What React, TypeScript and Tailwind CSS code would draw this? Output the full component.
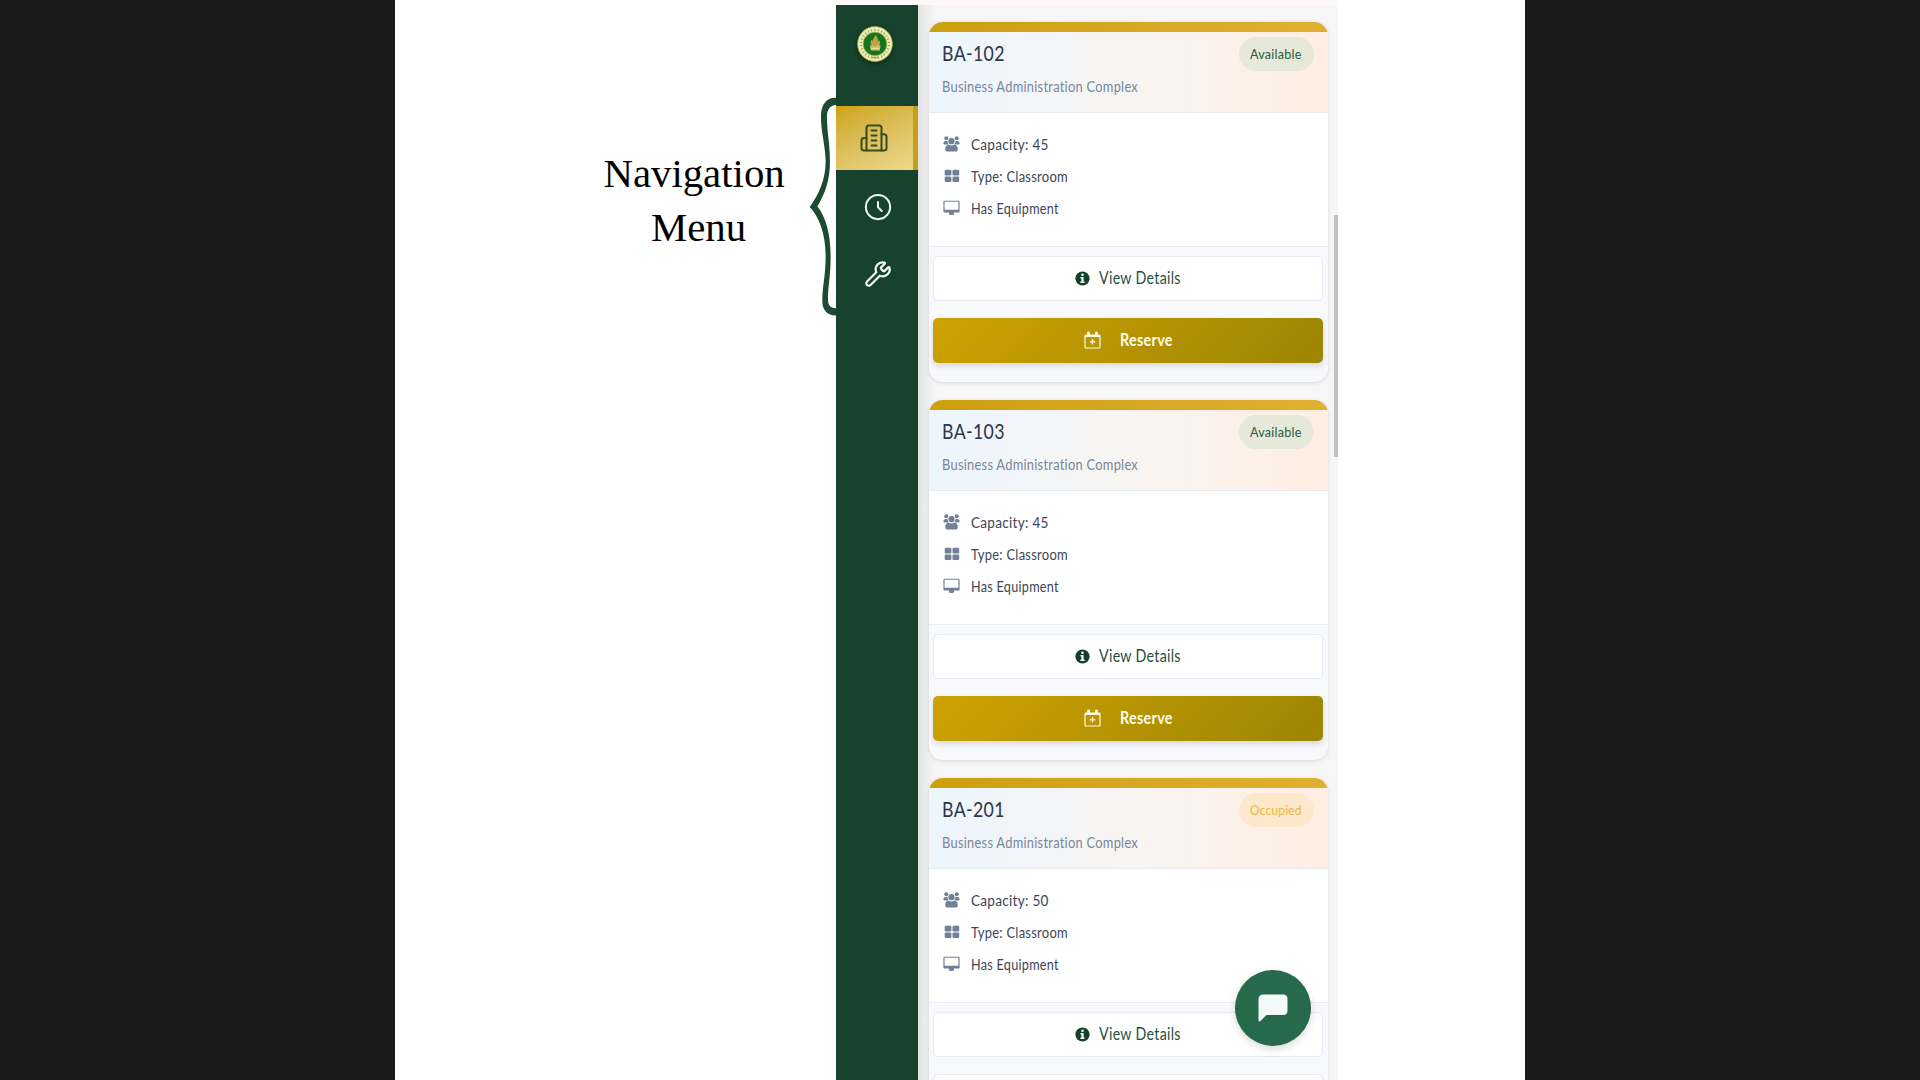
import { useLayoutEffect, useRef, useState } from "react";
import type { ReactNode } from "react";
import { Wrench } from "lucide-react";

type Room = { name: string; capacity: number; available: boolean };

const rooms: Room[] = [
  { name: "BA-102", capacity: 45, available: true },
  { name: "BA-103", capacity: 45, available: true },
  { name: "BA-201", capacity: 50, available: false },
];

/** Single line of text condensed horizontally to a given width. */
function Condensed({ width, className = "", children }: { width: number; className?: string; children: ReactNode }) {
  const ref = useRef<HTMLSpanElement>(null);
  const [scale, setScale] = useState(1);
  useLayoutEffect(() => {
    if (ref.current) setScale(width / ref.current.offsetWidth);
  }, [width, children]);
  return (
    <span className={"block shrink-0 whitespace-nowrap " + className} style={{ width }}>
      <span ref={ref} className="inline-block origin-left tracking-[0.02em]" style={{ transform: `scaleX(${scale})` }}>
        {children}
      </span>
    </span>
  );
}

function PeopleIcon() {
  return (
    <svg viewBox="0 0 17 16" className="h-4 w-[17px]" fill="currentColor">
      <circle cx="3.300" cy="2.300" r="2" />
      <circle cx="13.700" cy="2.300" r="2" />
      <circle cx="8.500" cy="5.200" r="3.100" />
      <path d="M.4 7.400c0-1.500.9-2.500 2.200-2.500h1.900c.1 1.500.6 2.500 1.500 3.500H1.200c-.5 0-.8-.3-.8-1ZM16.600 7.400c0-1.500-.9-2.500-2.200-2.500h-1.900c-.1 1.500-.6 2.500-1.500 3.500h4.800c.5 0 .8-.3.8-1Z" />
      <path d="M2.200 13c0-2.600 1.300-4.300 3.400-4.300.9.500 1.900.8 2.900.8s2-.3 2.900-.8c2.100 0 3.400 1.700 3.400 4.300 0 1.700-.8 2.600-2.400 2.600H4.600c-1.600 0-2.400-.9-2.400-2.600Z" />
    </svg>
  );
}

function GridIcon() {
  return (
    <svg viewBox="0 0 16 14" className="h-[14px] w-4" fill="currentColor">
      <rect x="0.7" y="0.8" width="6.7" height="5.6" rx="1.2" />
      <rect x="8.5" y="0.8" width="6.7" height="5.6" rx="1.2" />
      <rect x="0.7" y="7.4" width="6.7" height="5.6" rx="1.2" />
      <rect x="8.5" y="7.4" width="6.7" height="5.6" rx="1.2" />
    </svg>
  );
}

function MonitorIcon() {
  return (
    <svg viewBox="0 0 17 16" className="h-4 w-[17px]" fill="currentColor">
      <path
        fillRule="evenodd"
        d="M1.6.7h13.8c.7 0 1.2.5 1.2 1.2v9.5c0 .7-.5 1.2-1.2 1.2h-4.400v1c0 .8-.4 1.300-1.100 1.300H7.100c-.7 0-1.100-.5-1.100-1.300v-1H1.6c-.7 0-1.2-.5-1.2-1.2V1.900c0-.7.5-1.200 1.200-1.200Zm0 1.100v7.900h13.800V1.800Z"
      />
    </svg>
  );
}

function InfoIcon() {
  return (
    <svg viewBox="0 0 15 15" className="size-[15px]">
      <circle cx="7.500" cy="7.500" r="7.100" fill="#12402b" />
      <circle cx="7.500" cy="3.700" r="1.300" fill="#fff" />
      <path d="M5.500 6.100h3.100v4.300h1v1.500H5.400v-1.500h1V7.600h-.9Z" fill="#fff" />
    </svg>
  );
}

function CalendarPlusIcon() {
  return (
    <svg viewBox="0 0 17 18" className="h-[18px] w-[17px] -translate-y-px" fill="none" stroke="currentColor">
      <rect x="1" y="4" width="15" height="13" rx="1" strokeWidth="1.2" />
      <path d="M1 5h15" strokeWidth="2" />
      <path d="M4.500 2v2.200M12.500 2v2.200" strokeWidth="2.800" strokeLinecap="round" />
      <path d="M8.500 8v5.600M5.700 10.800h5.600" strokeWidth="1.300" />
    </svg>
  );
}

function BuildingIcon() {
  return (
    <svg viewBox="0 0 24 24" className="size-[30px]" fill="none" stroke="currentColor" strokeWidth="1.600" strokeLinecap="round" strokeLinejoin="round">
      <path d="M6 22V4a2 2 0 0 1 2-2h8a2 2 0 0 1 2 2v18Z" />
      <path d="M6 12H4a2 2 0 0 0-2 2v6a2 2 0 0 0 2 2h2" />
      <path d="M18 9h2a2 2 0 0 1 2 2v9a2 2 0 0 1-2 2h-2" />
      <path d="M10 6h4M10 10h4M10 14h4M10 18h4" />
    </svg>
  );
}

function Seal() {
  const marks = Array.from({ length: 26 }, (_, i) => i * (360 / 26));
  return (
    <svg viewBox="0 0 36 36" className="size-9 rounded-full shadow-[0_2px_5px_rgba(0,0,0,0.4)]">
      <circle cx="18" cy="18" r="17.500" fill="#efedb4" stroke="#8fa83a" strokeWidth="0.9" />
      {marks.map((a) => (
        <path key={a} d="M17.500 2.900h1v2.200h-1z" fill="#8a9a55" transform={`rotate(${a} 18 18)`} />
      ))}
      <circle cx="18" cy="18" r="11.800" fill="#177320" stroke="#a5b44a" strokeWidth="0.7" />
      <path d="M19 8.500c-1 2.500-3 3.600-3.200 6.200l-1.700-.8c-.9 3-.1 5 .9 6.100h6.900c1.300-1.500 1.500-4 .6-5.800l-1.300 1.200c.2-2.400-1.400-3.900-2.200-6.900Z" fill="#c0a13c" />
      <path d="M13 19.500q2.800-.6 5.200.7 2.500-1.300 5.300-.7l-.8 5h-8.900Z" fill="#d9bf62" />
      <path d="M14 22.500h8.500" stroke="#efe2a0" strokeWidth="0.8" />
      <path d="M14 31.500h8" stroke="#c98e49" strokeWidth="1.300" />
    </svg>
  );
}

function Brace() {
  return (
    <svg viewBox="686 52 82 658" className="h-[219.300px] w-[27.300px]" fill="#1d4a34">
      <path d="M768 54C740 52 722 73 722 110C722 160 736 200 736 245C736 300 715 345 688 382C715 410 736 460 736 530C736 590 726 620 726 665C726 692 742 709 768 708V686C752 686 743 680 743 660C743 620 751 590 751 530C751 460 735 410 711 380C735 340 749 300 749 245C749 190 740 160 740 110C740 90 750 76 768 76Z" />
    </svg>
  );
}

function Detail({ icon, width, children }: { icon: ReactNode; width: number; children: ReactNode }) {
  return (
    <li className="flex h-8 items-center gap-[11px]">
      <span className="flex w-[17px] -translate-y-px justify-center text-[#718096]">{icon}</span>
      <Condensed width={width}>{children}</Condensed>
    </li>
  );
}

function RoomCard({ room }: { room: Room }) {
  return (
    <article className="h-[360px] shrink-0 overflow-hidden rounded-[14px] bg-[#f7f9fc] shadow-[0_1px_4px_rgba(0,0,0,0.12)]">
      <div className="h-[10px] bg-linear-to-r from-[#cc9f0c] to-[#e0b030]" />
      <header className="flex h-[81px] justify-between border-b border-[#e6e9ed] bg-linear-to-r from-[#edf5ff] via-[#f8f5f2] to-[#ffeee2] pr-[14.500px] pl-[13px]">
        <div className="pt-[7px]">
          <h2 className="text-[21px] leading-7 text-[#2d3748]">
            <Condensed width={62.500}>{room.name}</Condensed>
          </h2>
          <p className="pt-[7px] text-[15.500px] leading-6 text-[#7a8699]">
            <Condensed width={196}>Business Administration Complex</Condensed>
          </p>
        </div>
        <span
          className={
            "mt-[5px] flex h-[34px] w-[75px] items-center justify-center rounded-full pb-px text-[13.500px] " +
            (room.available ? "bg-[#e6e8da] text-[#2b5a3d]" : "bg-[#fee8cb] text-[#e6b93c]")
          }
        >
          <Condensed width={52}>{room.available ? "Available" : "Occupied"}</Condensed>
        </span>
      </header>
      <ul className="h-[133px] bg-white pt-[15.500px] pl-[14px] text-[15.500px] text-[#3c4655]">
        <Detail icon={<PeopleIcon />} width={78}>{`Capacity: ${room.capacity}`}</Detail>
        <Detail icon={<GridIcon />} width={97}>
          Type: Classroom
        </Detail>
        <Detail icon={<MonitorIcon />} width={87.500}>
          Has Equipment
        </Detail>
      </ul>
      <footer className="flex flex-col gap-[17px] border-t border-[#eaedf1] pt-[9px] pr-[5px] pl-1">
        <button className="flex h-[45px] items-center justify-center gap-[9px] rounded-[5px] border border-[#e6eaee] bg-white text-[16.500px] text-[#24523c]">
          <InfoIcon />
          <Condensed width={82}>View Details</Condensed>
        </button>
        {room.available ? (
          <button className="flex h-[45px] items-center justify-center gap-[19px] rounded-[5px] bg-linear-135 from-[#cfa203] to-[#9c8502] text-[16.500px] font-bold text-[#fffbe8] shadow-[0_3px_6px_rgba(0,0,0,0.14)]">
            <CalendarPlusIcon />
            <Condensed width={53}>Reserve</Condensed>
          </button>
        ) : (
          <button className="h-[45px] rounded-[5px] border border-[#e6eaee] bg-white" />
        )}
      </footer>
    </article>
  );
}

function NavigationRail() {
  return (
    <nav className="flex h-[1075px] w-[82px] shrink-0 flex-col bg-[#17432e]">
      <div className="flex h-[101px] items-start justify-center pt-[21px] pr-[5px]">
        <Seal />
      </div>
      <a className="flex h-[63.500px] items-center justify-center border-r-[5px] border-[#c49f18] bg-linear-155 from-[#cda508] to-[#ecd98d] pr-px text-[#354d1b]">
        <BuildingIcon />
      </a>
      <a className="flex h-[74px] items-center justify-center pl-px text-[#eff8ec]">
        <svg viewBox="0 0 24 24" className="size-[30px]" fill="none" stroke="currentColor" strokeWidth="1.600" strokeLinecap="round" strokeLinejoin="round">
          <circle cx="12" cy="12" r="9.700" />
          <path d="M12 8v4.200l3 3" />
        </svg>
      </a>
      <a className="flex h-[61px] items-center justify-center pl-px text-[#eff8ec]">
        <Wrench size={28} strokeWidth={1.900} />
      </a>
    </nav>
  );
}

export default function App() {
  return (
    <div className="flex h-[1080px] w-[1920px] justify-center overflow-hidden bg-[#1a1a1a] font-[Lato,sans-serif]">
      <main className="flex w-[1130px] bg-white">
        <section className="flex w-[441px] shrink-0 items-start justify-end">
          <h1 className="mt-[147px] mr-6 text-center font-['Liberation_Serif',serif] text-[40.800px] leading-[54px] text-black">
            Navigation
            <br />
            <span className="pl-[9px]">Menu</span>
          </h1>
          <div className="mt-[97.300px]">
            <Brace />
          </div>
        </section>
        <section className="relative flex h-[1080px] w-[502px] shrink-0 border-t-[5px] border-[#fff8f8] bg-[#f6f6f6]">
          <NavigationRail />
          <div className="flex h-[1075px] w-[420px] flex-col gap-[18px] overflow-hidden bg-linear-to-r from-[#e3e3e3] via-[#f6f6f6] via-4% to-[#f6f6f6] pt-[17.200px] pr-[10px] pl-[11px]">
            {rooms.map((room) => (
              <RoomCard key={room.name} room={room} />
            ))}
          </div>
          <div className="absolute top-[210px] right-0 h-[242px] w-[4px] bg-[#c1c1c1]" />
          <button className="absolute top-[965px] left-[399px] flex size-[75.500px] items-center justify-center rounded-full bg-[#276a4b] shadow-[0_3px_8px_rgba(0,0,0,0.15)]">
            <svg viewBox="0 0 30 28" className="h-7 w-[30px]" fill="#f4faf7">
              <path d="M5.500 0.500h19.500q4.500 0 4.500 4.500v11.500q0 4.500-4.500 4.500H8.500L2.200 27.200Q.5 28 .5 26V5.500q0-5 5-5Z" />
            </svg>
          </button>
        </section>
      </main>
    </div>
  );
}
